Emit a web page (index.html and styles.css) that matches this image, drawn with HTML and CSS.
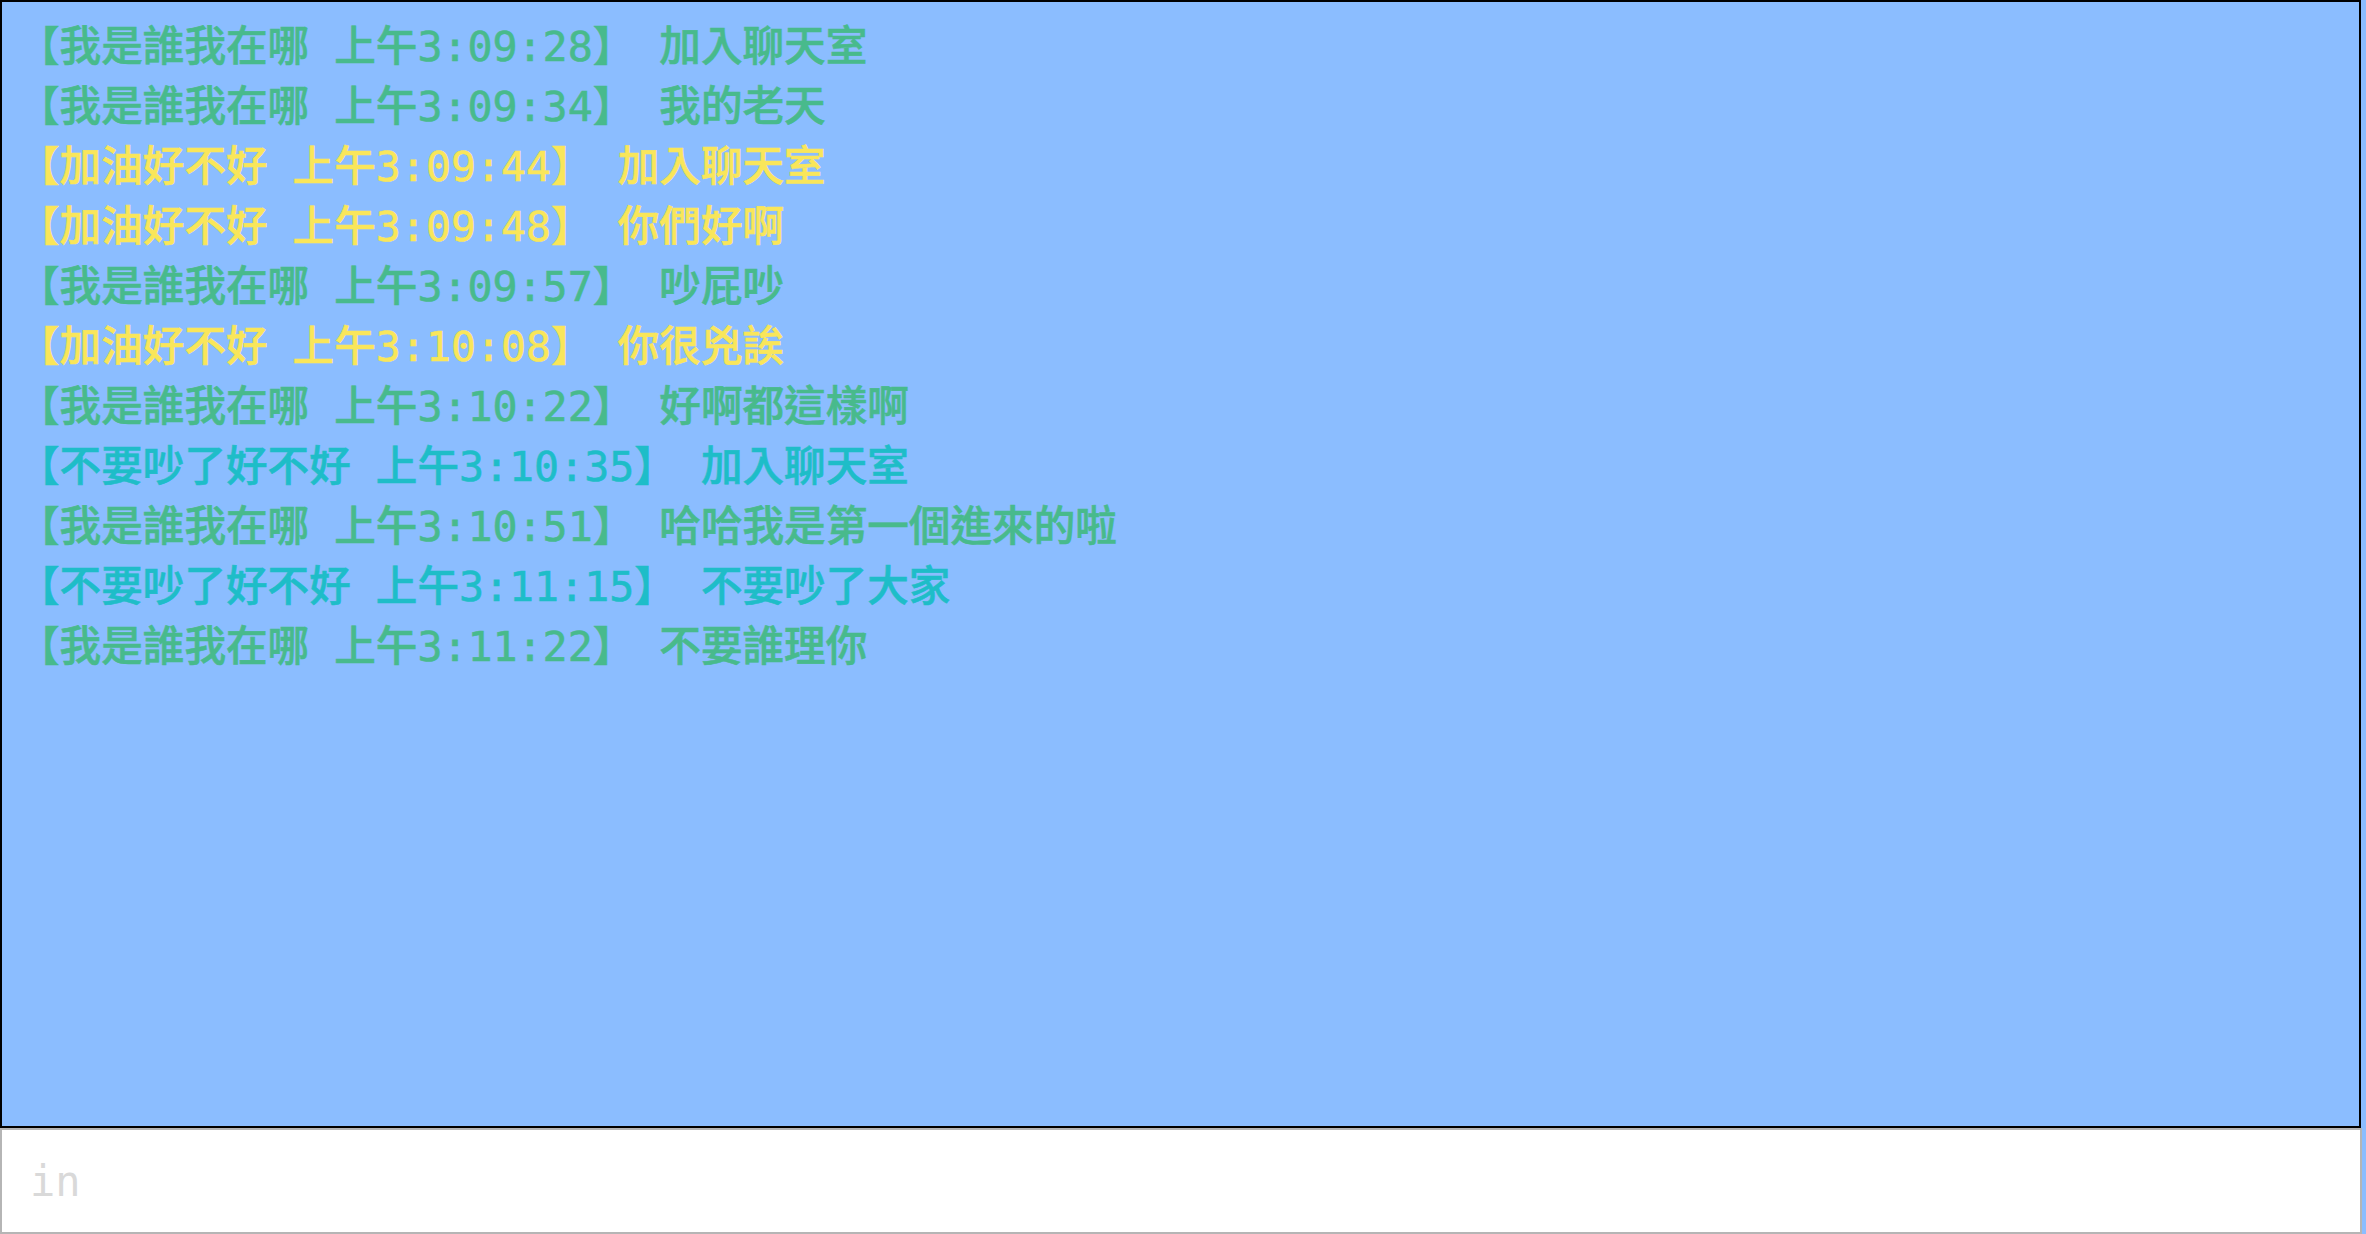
FILE: index.html
```html
<!DOCTYPE html>
<html lang="zh-Hant">
<head>
<meta charset="utf-8">
<title>聊天室</title>
<link rel="stylesheet" href="styles.css">
</head>
<body>
<div class="app">
  <div class="chat">
    <div class="msg green">【我是誰我在哪 上午3:09:28】 加入聊天室</div>
    <div class="msg green">【我是誰我在哪 上午3:09:34】 我的老天</div>
    <div class="msg yellow">【加油好不好 上午3:09:44】 加入聊天室</div>
    <div class="msg yellow">【加油好不好 上午3:09:48】 你們好啊</div>
    <div class="msg green">【我是誰我在哪 上午3:09:57】 吵屁吵</div>
    <div class="msg yellow">【加油好不好 上午3:10:08】 你很兇誒</div>
    <div class="msg green">【我是誰我在哪 上午3:10:22】 好啊都這樣啊</div>
    <div class="msg cyan">【不要吵了好不好 上午3:10:35】 加入聊天室</div>
    <div class="msg green">【我是誰我在哪 上午3:10:51】 哈哈我是第一個進來的啦</div>
    <div class="msg cyan">【不要吵了好不好 上午3:11:15】 不要吵了大家</div>
    <div class="msg green">【我是誰我在哪 上午3:11:22】 不要誰理你</div>
  </div>
  <input class="entry" type="text" placeholder="in">
</div>
</body>
</html>
```
FILE: styles.css
```css
html, body {
  margin: 0;
  padding: 0;
  background: #8bbdff;
  height: 100%;
  overflow: hidden;
}

.app {
  display: flex;
  flex-direction: column;
  width: 2362px;
  height: 1234px;
}

.chat {
  box-sizing: border-box;
  width: 2361px;
  height: 1128px;
  border: 2px solid #000;
  padding: 15px 0 0 16px;
  font-family: "DejaVu Sans Mono", "Noto Sans CJK TC", monospace;
  font-weight: 500;
  font-size: 41.6px;
  line-height: 60px;
  -webkit-text-stroke: 0.6px currentColor;
  overflow: hidden;
}

.msg {
  height: 60px;
  white-space: pre;
}

.green { color: #48ba8c; }
.yellow { color: #f9e65a; }
.cyan { color: #1ebdc8; }

.entry {
  box-sizing: border-box;
  width: 2362px;
  height: 106px;
  margin: 0;
  border: 2px solid #b5b5b5;
  background: #fff;
  padding: 0 0 0 28px;
  font-family: "DejaVu Sans Mono", "Noto Sans CJK TC", monospace;
  font-size: 42px;
  color: #333;
  outline: none;
}

.entry::placeholder {
  color: #d9d9d9;
}
```
